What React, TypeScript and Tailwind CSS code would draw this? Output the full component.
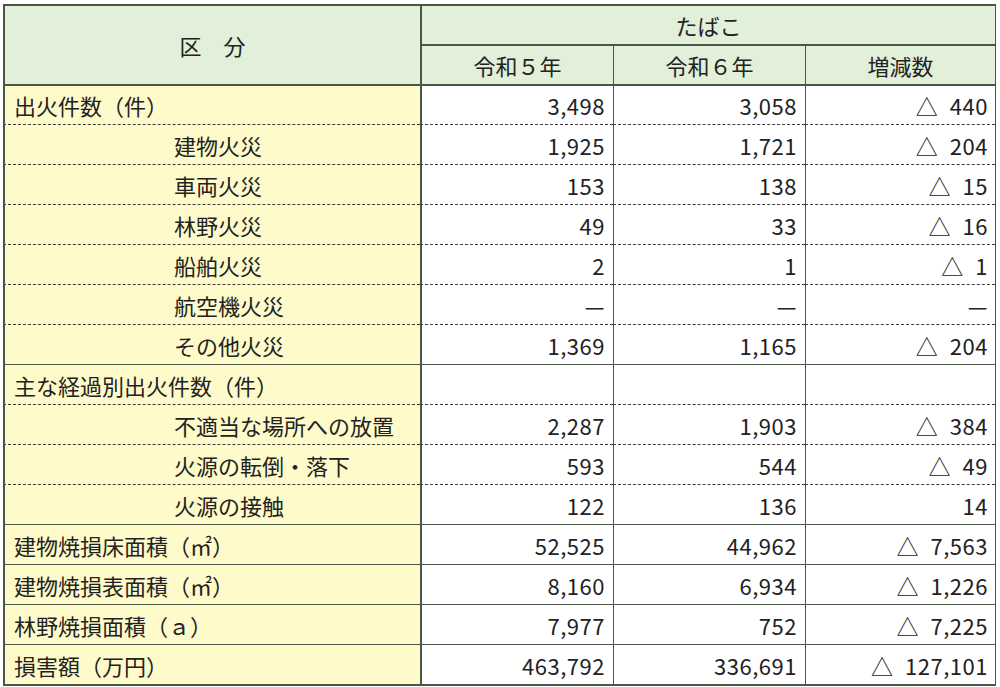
import React from "react";

type Row = {
  label: string;
  sub?: boolean;
  top: "thick" | "solid" | "dashed";
  r5: string;
  r6: string;
  diff: string;
};

const rows: Row[] = [
  { label: "出火件数（件）", top: "thick", r5: "3,498", r6: "3,058", diff: "△\u2002440" },
  { label: "建物火災", sub: true, top: "dashed", r5: "1,925", r6: "1,721", diff: "△\u2002204" },
  { label: "車両火災", sub: true, top: "dashed", r5: "153", r6: "138", diff: "△\u200215" },
  { label: "林野火災", sub: true, top: "dashed", r5: "49", r6: "33", diff: "△\u200216" },
  { label: "船舶火災", sub: true, top: "dashed", r5: "2", r6: "1", diff: "△\u20021" },
  { label: "航空機火災", sub: true, top: "dashed", r5: "—", r6: "—", diff: "—" },
  { label: "その他火災", sub: true, top: "dashed", r5: "1,369", r6: "1,165", diff: "△\u2002204" },
  { label: "主な経過別出火件数（件）", top: "solid", r5: "", r6: "", diff: "" },
  { label: "不適当な場所への放置", sub: true, top: "dashed", r5: "2,287", r6: "1,903", diff: "△\u2002384" },
  { label: "火源の転倒・落下", sub: true, top: "dashed", r5: "593", r6: "544", diff: "△\u200249" },
  { label: "火源の接触", sub: true, top: "dashed", r5: "122", r6: "136", diff: "14" },
  { label: "建物焼損床面積（㎡）", top: "solid", r5: "52,525", r6: "44,962", diff: "△\u20027,563" },
  { label: "建物焼損表面積（㎡）", top: "solid", r5: "8,160", r6: "6,934", diff: "△\u20021,226" },
  { label: "林野焼損面積（ａ）", top: "solid", r5: "7,977", r6: "752", diff: "△\u20027,225" },
  { label: "損害額（万円）", top: "solid", r5: "463,792", r6: "336,691", diff: "△\u2002127,101" },
];

// only the top edge changes style between rows; the side lines stay solid
const topClass = {
  thick: "border-t-2 border-t-[#4a5646]",
  solid: "border-t border-t-[#4a5646]",
  dashed: "border-t [border-top-style:dashed] border-t-[#3c3c3c]",
};

function App() {
  return (
    <div
      className="w-[1000px] h-[687px] bg-white pt-[4px] pl-[3px] text-[#222]"
      style={{ fontFamily: '"Noto Sans CJK JP", "Noto Sans", sans-serif' }}
    >
      <table className="table-fixed border-separate border-spacing-0 w-[992px] text-[22px] leading-none border-r border-b-2 border-[#4a5646]">
        <colgroup>
          <col className="w-[417px]" />
          <col className="w-[193px]" />
          <col className="w-[192px]" />
          <col className="w-[190px]" />
        </colgroup>
        <thead>
          <tr className="h-[40px]">
            <th
              rowSpan={2}
              className="bg-[#e2efd9] font-normal border-l-2 border-t-2 border-[#4a5646] text-center"
            >
              区　分
            </th>
            <th
              colSpan={3}
              className="bg-[#e2efd9] font-normal border-l-2 border-t-2 border-[#4a5646] text-center"
            >
              たばこ
            </th>
          </tr>
          <tr className="h-[40px]">
            <th className="bg-[#e2efd9] font-normal border-l-2 border-t-2 border-[#4a5646] text-center">
              令和５年
            </th>
            <th className="bg-[#e2efd9] font-normal border-l border-t-2 border-[#4a5646] text-center">
              令和６年
            </th>
            <th className="bg-[#e2efd9] font-normal border-l border-t-2 border-[#4a5646] text-center">
              増減数
            </th>
          </tr>
        </thead>
        <tbody>
          {rows.map((r) => (
            <tr key={r.label} className="h-[40px]">
              <td
                className={`bg-[#fffac9] border-l-2 border-l-[#4a5646] whitespace-nowrap ${topClass[r.top]} ${
                  r.sub ? "pl-[169px]" : "pl-[9px]"
                }`}
              >
                {r.label}
              </td>
              <td className={`text-right pr-[8px] tracking-[0.5px] border-l-2 border-l-[#4a5646] ${topClass[r.top]}`}>
                {r.r5}
              </td>
              <td className={`text-right pr-[8px] tracking-[0.5px] border-l border-l-[#4a5646] ${topClass[r.top]}`}>
                {r.r6}
              </td>
              <td className={`text-right pr-[7px] tracking-[0.5px] border-l border-l-[#4a5646] ${topClass[r.top]}`}>
                {r.diff}
              </td>
            </tr>
          ))}
        </tbody>
      </table>
    </div>
  );
}

export default App;
